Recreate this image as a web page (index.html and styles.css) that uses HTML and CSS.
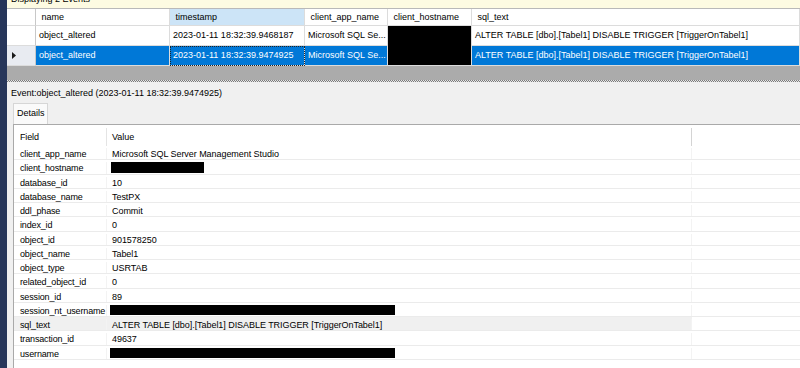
FILE: index.html
```html
<!DOCTYPE html>
<html>
<head>
<meta charset="utf-8">
<link rel="stylesheet" href="styles.css">
</head>
<body>
<div class="app">
  <div class="rail"></div>
  <div class="main">
    <div class="infobar"><span>Displaying 2 Events</span></div>
    <div class="events">
      <div class="ec rh"></div>
      <div class="ec hd">name</div>
      <div class="ec hd sorted">timestamp</div>
      <div class="ec hd">client_app_name</div>
      <div class="ec hd">client_hostname</div>
      <div class="ec hd">sql_text</div>

      <div class="ec rh"></div>
      <div class="ec">object_altered</div>
      <div class="ec">2023-01-11 18:32:39.9468187</div>
      <div class="ec">Microsoft SQL Se...</div>
      <div class="ec redact top"></div>
      <div class="ec">ALTER TABLE [dbo].[Tabel1] DISABLE TRIGGER [TriggerOnTabel1]</div>

      <div class="ec rh cur"><svg class="arrow" width="5" height="7" viewBox="0 0 5 7"><polygon points="0,0 4,3.5 0,7" fill="#1a1a1a"/></svg></div>
      <div class="ec sel">object_altered</div>
      <div class="ec sel focus">2023-01-11 18:32:39.9474925</div>
      <div class="ec sel">Microsoft SQL Se...</div>
      <div class="ec redact"></div>
      <div class="ec sel">ALTER TABLE [dbo].[Tabel1] DISABLE TRIGGER [TriggerOnTabel1]</div>
    </div>
    <div class="workspace"></div>
    <div class="splitter"></div>
    <div class="panel">
      <div class="caption">Event:object_altered (2023-01-11 18:32:39.9474925)</div>
      <div class="tabs"><div class="tab">Details</div></div>
      <div class="tabpage">
        <div class="details">
          <div class="drow dhead"><div class="f">Field</div><div class="v">Value</div><div class="x"></div></div>
          <div class="drow"><div class="f">client_app_name</div><div class="v">Microsoft SQL Server Management Studio</div><div class="x"></div></div>
          <div class="drow"><div class="f">client_hostname</div><div class="v"><span class="bar short"></span></div><div class="x"></div></div>
          <div class="drow"><div class="f">database_id</div><div class="v">10</div><div class="x"></div></div>
          <div class="drow"><div class="f">database_name</div><div class="v">TestPX</div><div class="x"></div></div>
          <div class="drow"><div class="f">ddl_phase</div><div class="v">Commit</div><div class="x"></div></div>
          <div class="drow"><div class="f">index_id</div><div class="v">0</div><div class="x"></div></div>
          <div class="drow"><div class="f">object_id</div><div class="v">901578250</div><div class="x"></div></div>
          <div class="drow"><div class="f">object_name</div><div class="v">Tabel1</div><div class="x"></div></div>
          <div class="drow"><div class="f">object_type</div><div class="v">USRTAB</div><div class="x"></div></div>
          <div class="drow"><div class="f">related_object_id</div><div class="v">0</div><div class="x"></div></div>
          <div class="drow"><div class="f">session_id</div><div class="v">89</div><div class="x"></div></div>
          <div class="drow"><div class="f">session_nt_username</div><div class="v"><span class="bar long"></span></div><div class="x"></div></div>
          <div class="drow picked"><div class="f">sql_text</div><div class="v">ALTER TABLE [dbo].[Tabel1] DISABLE TRIGGER [TriggerOnTabel1]</div><div class="x"></div></div>
          <div class="drow"><div class="f">transaction_id</div><div class="v">49637</div><div class="x"></div></div>
          <div class="drow"><div class="f">username</div><div class="v"><span class="bar long"></span></div><div class="x"></div></div>
        </div>
      </div>
    </div>
  </div>
</div>
</body>
</html>
```

FILE: styles.css
```css
* { box-sizing: border-box; margin: 0; padding: 0; }
html, body { width: 800px; height: 368px; overflow: hidden; }
body {
  font-family: "Liberation Sans", Arial, sans-serif;
  font-size: 9px;
  color: #000;
  background: #f0f0f0;
}
.app { display: flex; height: 368px; }
.rail { width: 7px; flex: none; background: #27365a; }
.main { flex: 1; display: flex; flex-direction: column; min-width: 0; }

.infobar {
  height: 9px;
  flex: none;
  background: #fdfbe2;
  border-bottom: 1px solid #b9b9b9;
  overflow: hidden;
  padding-left: 4px;
}
.infobar span { display: block; line-height: 12px; margin-top: -7px; }

.events {
  display: grid;
  grid-template-columns: 29px 134px 135px 83px 84px 1fr;
  grid-template-rows: 17px 20px 20px;
  background: #fff;
  flex: none;
}
.ec {
  border-right: 1px solid #dcdcdc;
  border-bottom: 1px solid #dcdcdc;
  white-space: nowrap;
  overflow: hidden;
  padding-left: 3px;
  line-height: 19px;
}
.ec.hd { padding-left: 5.5px; line-height: 16px; }
.ec.sorted { background: #cce4f7; }
.ec.rh { border-right-color: #c8c8c8; }
.ec.cur { background: #e8ebf1; display: flex; align-items: center; padding-left: 5px; }
.ec.sel { background: #0078d7; color: #fff; }
.ec.focus { outline: 1px dotted #222; outline-offset: -1px; }
.ec.redact { background: #000; }
.ec.redact.top { border-bottom: none; }

.workspace { height: 14px; flex: none; background: #ababab; }
.splitter {
  height: 2px;
  flex: none;
  background: conic-gradient(#7c7c7c 25%, #e4e4e4 0 50%, #7c7c7c 0 75%, #e4e4e4 0) 0 0 / 2px 2px;
}

.panel { flex: 1; display: flex; flex-direction: column; min-height: 0; background: #f0f0f0; }
.caption { height: 21px; line-height: 20px; padding: 1px 0 0 4px; flex: none; }
.tabs { height: 21px; flex: none; display: flex; padding-left: 6px; }
.tab {
  width: 35px;
  height: 21px;
  background: #fafafa;
  border: 1px solid #d6d6d6;
  border-bottom: none;
  line-height: 18px;
  padding-left: 3px;
  margin-bottom: -1px;
  position: relative;
  z-index: 1;
}
.tabpage {
  flex: 1;
  margin-left: 6px;
  border-top: 1px solid #a9a9a9;
  border-left: 1px solid #a9a9a9;
  background: #fff;
  min-height: 0;
  overflow: hidden;
}
.details { display: flex; flex-direction: column; }
.drow {
  display: grid;
  grid-template-columns: 93px 585px 1fr;
  height: 14.25px;
  line-height: 13px;
  padding-top: 2px;
  border-bottom: 1px solid #ebebeb;
  white-space: nowrap;
}
.drow.dhead { height: 21px; line-height: 18px; padding-top: 3px; border-bottom: none; }
.drow .f { padding-left: 6px; border-right: 1px solid #f3f3f3; overflow: hidden; letter-spacing: -0.15px; }
.drow .v { padding-left: 5px; border-right: 1px solid #f3f3f3; overflow: hidden; letter-spacing: -0.05px; }
.drow.dhead .f { border-right-color: #e4e4e4; }
.drow.dhead .v { border-right-color: #d4d4d4; }
.drow.picked { background: linear-gradient(#f0f0f0, #f0f0f0) 0 0 / 678px 100% no-repeat; }
.bar { display: block; height: 11px; background: #000; }
.bar.short { width: 93px; margin: -0.5px 0 0 -1px; }
.bar.long { width: 285px; margin: -1px 0 0 -2px; }
```
